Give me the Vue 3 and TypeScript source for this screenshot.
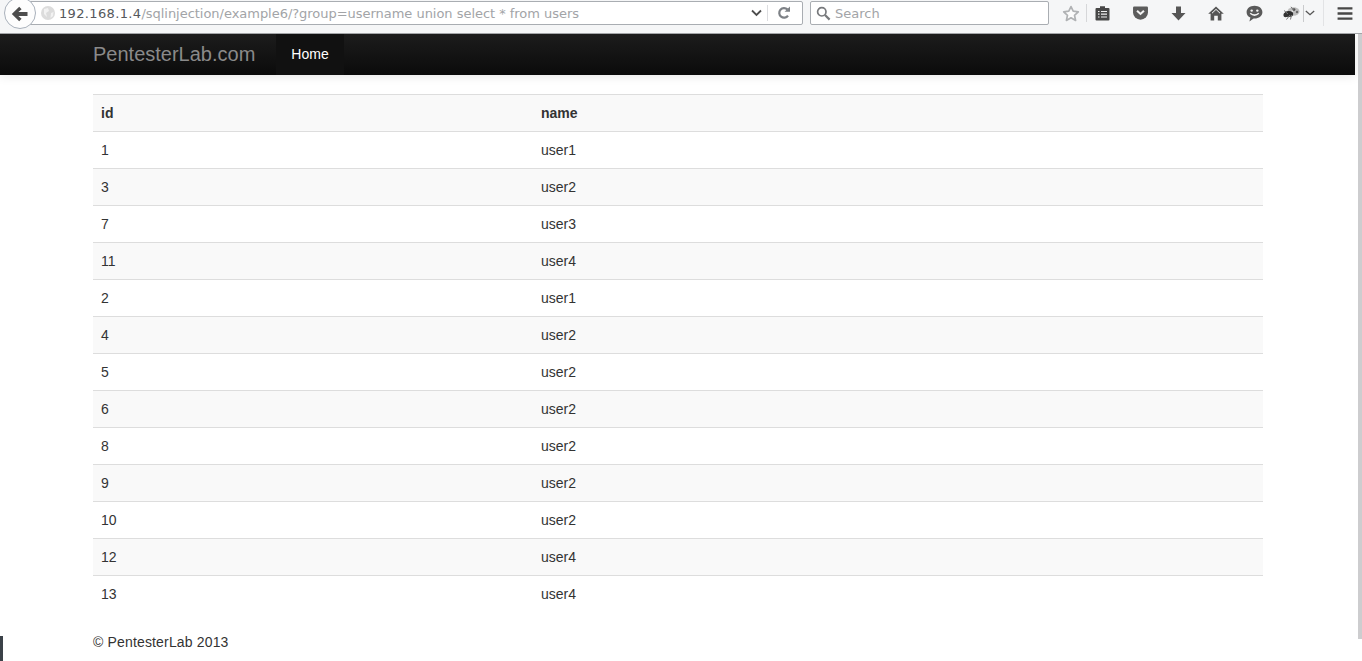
<script setup lang="ts">
interface Row { id: number; name: string }
const rows: Row[] = [
  { id: 1, name: 'user1' }, { id: 3, name: 'user2' }, { id: 7, name: 'user3' },
  { id: 11, name: 'user4' }, { id: 2, name: 'user1' }, { id: 4, name: 'user2' },
  { id: 5, name: 'user2' }, { id: 6, name: 'user2' }, { id: 8, name: 'user2' },
  { id: 9, name: 'user2' }, { id: 10, name: 'user2' }, { id: 12, name: 'user4' },
  { id: 13, name: 'user4' },
]
</script>

<template>
  <div class="screen">
    <header class="toolbar">
      <button class="back" aria-label="Back">
        <svg width="18" height="16" viewBox="0 0 18 16"><path d="M8.2 0.8 L10.6 3.2 L7.4 6 H16.5 V10 H7.4 L10.6 12.8 L8.2 15.2 L0.8 8 Z" fill="#4d4d4d"/></svg>
      </button>
      <div class="urlbar">
        <svg class="globe" width="14" height="14" viewBox="0 0 14 14"><circle cx="7" cy="7" r="7" fill="#dcdcdc"/><path d="M3 3 L7 2 L8 5 L5 7 L6 11 L3 8 Z M10 7 L12.5 6 L12 10 L9.5 12 Z" fill="#f2f2f2"/></svg>
        <span class="url"><span class="host">192.168.1.4</span>/sqlinjection/example6/?group=username union select * from users</span>
        <svg class="drop" width="13" height="8" viewBox="0 0 13 8"><path d="M2 1.5 L6.5 6 L11 1.5" fill="none" stroke="#4d4d4d" stroke-width="1.8"/></svg>
        <span class="url-sep"></span>
        <svg class="reload" width="14" height="14" viewBox="0 0 14 14"><path d="M11 9.6 A4.8 4.8 0 1 1 10.4 3.4" fill="none" stroke="#7d8186" stroke-width="2.2"/><path d="M7.6 5.8 H13 V0.6 Z" fill="#7d8186"/></svg>
      </div>
      <div class="search">
        <svg width="15" height="15" viewBox="0 0 15 15"><circle cx="5.8" cy="5.8" r="4.2" fill="none" stroke="#77797c" stroke-width="1.7"/><path d="M9 9 L13.6 13.6" stroke="#77797c" stroke-width="2.2"/></svg>
        <span class="search-label">Search</span>
      </div>
      <div class="tools">
        <span class="tool star">
          <svg width="18" height="17" viewBox="0 0 18 17"><path d="M9 1.6 L11.2 6.2 L16.3 6.8 L12.5 10.3 L13.6 15.4 L9 12.8 L4.4 15.4 L5.5 10.3 L1.7 6.8 L6.8 6.2 Z" fill="#fbfbfb" stroke="#b0b2b4" stroke-width="1.7" stroke-linejoin="round"/></svg>
        </span>
        <span class="tool-sep"></span>
        <span class="tool">
          <svg width="15" height="16" viewBox="0 0 15 16"><path d="M1.5 3 H5 V1.2 H10 V3 H13.5 Q14.5 3 14.5 4 V14.5 Q14.5 15.5 13.5 15.5 H1.5 Q0.5 15.5 0.5 14.5 V4 Q0.5 3 1.5 3 Z" fill="#474747"/><path d="M3 6.5 H4.5 M6 6.5 H12 M3 9.2 H4.5 M6 9.2 H12 M3 12 H4.5 M6 12 H12" stroke="#f0f0f0" stroke-width="1.2"/></svg>
        </span>
        <span class="tool">
          <svg width="17" height="14" viewBox="0 0 17 15"><path d="M1.8 0.5 H15.2 Q16.5 0.5 16.5 1.8 V7 A8 7.6 0 0 1 0.5 7 V1.8 Q0.5 0.5 1.8 0.5 Z" fill="#5c5c5c"/><path d="M4.8 5 L8.5 8.5 L12.2 5" fill="none" stroke="#f3f3f3" stroke-width="2.2"/></svg>
        </span>
        <span class="tool">
          <svg width="15" height="15" viewBox="0 0 15 15"><path d="M5 0.5 H10 V7 H14.5 L7.5 14.5 L0.5 7 H5 Z" fill="#565656"/></svg>
        </span>
        <span class="tool">
          <svg width="16" height="15" viewBox="0 0 16 15"><path d="M8 0.5 L15.8 7.8 H13.4 V14.5 H9.8 V9.8 H6.2 V14.5 H2.6 V7.8 H0.2 Z" fill="#565656"/><path d="M8 3.4 L12 7.2 M8 3.4 L4 7.2" stroke="#f5f6f7" stroke-width="1"/></svg>
        </span>
        <span class="tool">
          <svg width="17" height="17" viewBox="0 0 17 17"><path d="M8.5 0.8 C13 0.8 16.4 3.6 16.4 7.2 C16.4 10.9 13 13.5 8.5 13.5 L7.6 13.5 L3.4 16.4 L4.4 12.6 C2 11.5 0.6 9.5 0.6 7.2 C0.6 3.6 4 0.8 8.5 0.8 Z" fill="#5a5a5a"/><circle cx="5.7" cy="5.6" r="1.2" fill="#f3f3f3"/><circle cx="11.3" cy="5.6" r="1.2" fill="#f3f3f3"/><path d="M4.2 8.2 Q8.5 12 12.8 8.2" fill="none" stroke="#f3f3f3" stroke-width="1.5"/></svg>
        </span>
        <span class="tool addon">
          <svg class="ant" width="17" height="14" viewBox="0 0 17 14"><ellipse cx="10.5" cy="5.5" rx="6" ry="4.2" fill="#bdbdbd"/><circle cx="11" cy="3.6" r="1.4" fill="#555"/><circle cx="14" cy="6" r="1.2" fill="#6a6a6a"/><circle cx="9" cy="5.5" r="1" fill="#f4f4f4"/><ellipse cx="5.8" cy="8" rx="4.4" ry="3" fill="#2f2f2f"/><circle cx="2.6" cy="9" r="2.2" fill="#333"/><path d="M1 4.5 L5 8 M3.5 13.5 L7 9 M7.5 13.5 L8.5 9 M8 0.8 L10.5 4" stroke="#777" stroke-width="1"/></svg>
          <span class="addon-sep"></span>
          <svg width="10" height="6" viewBox="0 0 12 7"><path d="M1 1 L6 5.5 L11 1" fill="none" stroke="#555" stroke-width="1.6"/></svg>
        </span>
        <span class="menu-sep"></span>
        <span class="tool menu">
          <svg width="16" height="13" viewBox="0 0 17 14"><path d="M0.5 1.5 H16.5 M0.5 7 H16.5 M0.5 12.5 H16.5" stroke="#474747" stroke-width="2.6"/></svg>
        </span>
      </div>
    </header>

    <div class="viewport">
      <div class="page">
        <nav class="navbar">
          <div class="container nav-inner">
            <a class="brand">PentesterLab.com</a>
            <a class="nav-item">Home</a>
          </div>
        </nav>
        <main class="container content">
          <table class="table">
            <thead>
              <tr><th class="col-id">id</th><th>name</th></tr>
            </thead>
            <tbody>
              <tr v-for="row in rows" :key="row.id">
                <td>{{ row.id }}</td>
                <td>{{ row.name }}</td>
              </tr>
            </tbody>
          </table>
          <footer class="footer">© PentesterLab 2013</footer>
        </main>
      </div>
      <aside class="scrollbar"><div class="thumb"></div></aside>
    </div>
    <div class="corner-mark"></div>
  </div>
</template>

<style scoped>
.screen {
  position: relative;
  width: 1362px;
  height: 661px;
  overflow: hidden;
  display: flex;
  flex-direction: column;
  background: #fff;
  font-family: "Liberation Sans", Arial, sans-serif;
  font-size: 14px;
  line-height: 20px;
  color: #333;
}
.toolbar {
  flex: none;
  height: 33px;
  border-bottom: 1px solid #a3a5a8;
  background: #f5f6f7;
  display: flex;
  align-items: flex-start;
  position: relative;
}
.back {
  position: relative;
  z-index: 1;
  flex: none;
  width: 32px;
  height: 32px;
  margin: -3px -7px 0 4px;
  padding: 0;
  border: 1px solid #a9b1bb;
  border-radius: 50%;
  background: #fdfdfd;
  display: flex;
  align-items: center;
  justify-content: center;
}
.back svg { margin-top: 1px; }
.urlbar {
  flex: none;
  width: 774px;
  height: 24px;
  margin-top: 1px;
  box-sizing: border-box;
  border: 1px solid #a9adb2;
  border-radius: 2px;
  background: #fff;
  display: flex;
  align-items: center;
  padding-left: 11px;
}
.globe { flex: none; }
.url {
  flex: 1;
  margin-left: 4px;
  padding-top: 2px;
  font-family: "DejaVu Sans", sans-serif;
  font-size: 13px;
  letter-spacing: -0.03px;
  white-space: nowrap;
  color: #a2a4a7;
}
.host { color: #55585c; letter-spacing: 0.35px; }
.drop { flex: none; margin-right: 4px; }
.url-sep {
  flex: none;
  width: 1px;
  height: 16px;
  background: #dcdde0;
  margin-right: 9px;
}
.reload { flex: none; margin-right: 11px; }
.search {
  flex: none;
  width: 239px;
  height: 24px;
  margin: 1px 0 0 7px;
  box-sizing: border-box;
  border: 1px solid #a9adb2;
  border-radius: 2px;
  background: #fff;
  display: flex;
  align-items: center;
  gap: 4px;
  padding-left: 5px;
  font-family: "DejaVu Sans", sans-serif;
  font-size: 13px;
  color: #a2a4a7;
}
.search-label { padding-top: 2px; }
.tools {
  flex: 1;
  display: flex;
  align-items: center;
  height: 26px;
  margin-left: 7px;
}
.tool {
  flex: none;
  width: 38px;
  height: 26px;
  display: flex;
  align-items: center;
  justify-content: center;
}
.tool.star { width: 30px; }
.tool-sep {
  flex: none;
  width: 1px;
  height: 18px;
  background: #d6d7d9;
  margin-right: -4px;
}
.addon {
  width: 50px;
  justify-content: flex-start;
  padding-left: 10px;
  box-sizing: border-box;
}
.ant { margin-right: 3px; }
.addon-sep {
  width: 1px;
  height: 17px;
  background: #c9cacc;
  margin-right: 1px;
}
.menu-sep {
  flex: none;
  width: 1px;
  height: 26px;
  background: #e2e3e5;
}
.tool.menu { width: 42px; }
.viewport {
  flex: 1;
  min-height: 0;
  display: flex;
}
.page {
  width: 1355px;
  flex: none;
}
.navbar {
  height: 41px;
  background-image: linear-gradient(to bottom, #1c1c1c, #0b0b0b);
  box-shadow: 0 1px 10px rgba(0, 0, 0, 0.1);
}
.container {
  width: 1170px;
  margin-left: 93px;
}
.nav-inner {
  display: flex;
  height: 41px;
}
.brand {
  font-size: 20px;
  line-height: 41px;
  color: #8a8a8a;
  margin-right: 21px;
}
.nav-item {
  padding: 0 15px;
  line-height: 40px;
  color: #fff;
  background: #111;
}
.content { padding-top: 19px; }
.table {
  width: 100%;
  border-collapse: collapse;
  border-spacing: 0;
}
.table th,
.table td {
  padding: 8px;
  text-align: left;
  border-top: 1px solid #ddd;
  line-height: 20px;
}
.table th { font-weight: bold; background: #f9f9f9; }
.col-id { width: 424px; }
.table tbody tr:nth-child(even) td { background: #f9f9f9; }
.footer { padding-top: 20px; letter-spacing: 0.16px; }
.scrollbar {
  flex: 1;
  display: flex;
  justify-content: flex-end;
}
.thumb {
  width: 4px;
  height: 605px;
  background: #cdcdcf;
}
.corner-mark {
  position: absolute;
  left: 0;
  bottom: 0;
  width: 3px;
  height: 25px;
  background: #3b4148;
}
</style>

<style>
html, body { margin: 0; overflow: hidden; background: #fff; }
</style>
